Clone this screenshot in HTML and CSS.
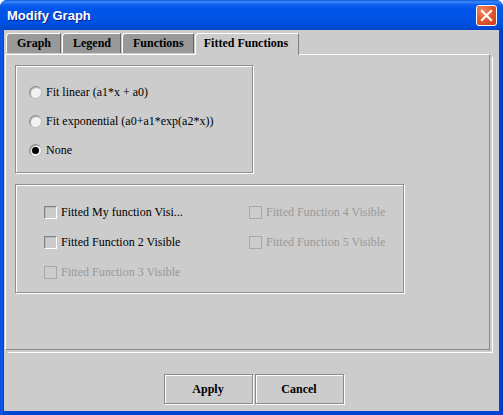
FILE: index.html
```html
<!DOCTYPE html>
<html>
<head>
<meta charset="utf-8">
<link rel="stylesheet" href="styles.css">
</head>
<body>
<div class="window">
  <div class="titlebar">
    <span class="title">Modify Graph</span>
    <div class="close">
      <svg width="21" height="21" viewBox="0 0 21 21"><path d="M6 6 L15 15 M15 6 L6 15" stroke="#fff" stroke-width="2.2" stroke-linecap="square"/></svg>
    </div>
  </div>
  <div class="client">
    <div class="tabs">
      <div class="tab">Graph</div>
      <div class="tab">Legend</div>
      <div class="tab">Functions</div>
      <div class="tab selected">Fitted Functions</div>
    </div>
    <div class="panel">
      <div class="group fit">
        <div class="radio"><span class="rb"></span>Fit linear (a1*x + a0)</div>
        <div class="radio"><span class="rb"></span>Fit exponential (a0+a1*exp(a2*x))</div>
        <div class="radio"><span class="rb on"></span>None</div>
      </div>
      <div class="group vis">
        <div class="check"><span class="cb"></span>Fitted My function Visi...</div>
        <div class="check disabled"><span class="cb"></span>Fitted Function 4 Visible</div>
        <div class="check"><span class="cb"></span>Fitted Function 2 Visible</div>
        <div class="check disabled"><span class="cb"></span>Fitted Function 5 Visible</div>
        <div class="check disabled"><span class="cb"></span>Fitted Function 3 Visible</div>
      </div>
    </div>
    <div class="buttons">
      <div class="btn">Apply</div>
      <div class="btn">Cancel</div>
    </div>
  </div>
</div>
</body>
</html>
```
FILE: styles.css
```css
html, body {
  margin: 0;
  padding: 0;
  background: #ffffff;
}
.window {
  width: 503px;
  height: 415px;
  display: flex;
  flex-direction: column;
  background: linear-gradient(to right, #0831d9 0, #166aee 1px, #0055e5 2px, #0046d5 4px, #0046d5 499px, #0a3fc8 501px, #0831d9 503px);
  border-radius: 7px 7px 0 0;
  overflow: hidden;
  font-size: 12px;
  color: #000;
}
.tab, .radio, .check, .btn {
  font-family: "Liberation Serif", "Tinos", "DejaVu Serif", serif;
}
.titlebar {
  height: 30px;
  flex: none;
  display: flex;
  align-items: center;
  justify-content: space-between;
  padding: 0 6px 0 7px;
  background: linear-gradient(to bottom, #0a5ade 0, #3d8af7 2px, #1665f0 4px, #0055ea 8px, #0053e6 18px, #0050e0 24px, #0046cc 29px, #0840c0 30px);
}
.title {
  font-family: "Liberation Sans", Arial, sans-serif;
  font-weight: bold;
  font-size: 13px;
  color: #fff;
  text-shadow: 1px 1px 0 #0a1e8c;
  margin-top: 1px;
}
.close {
  width: 21px;
  height: 21px;
  box-sizing: border-box;
  border: 1px solid #fff;
  border-radius: 3px;
  background: radial-gradient(circle at 30% 25%, #f08a66 0, #e25a30 45%, #c8401c 100%);
  display: flex;
  margin-top: 1px;
}
.close svg {
  margin: -1px;
}
.client {
  flex: 1;
  margin: 0 4px 4px 4px;
  background: #cccccc;
  display: flex;
  flex-direction: column;
}
.tabs {
  display: flex;
  padding: 3px 0 0 2px;
  height: 21px;
  position: relative;
  z-index: 1;
}
.tab {
  height: 20px;
  box-sizing: border-box;
  padding: 0 9px 0 10px;
  display: flex;
  align-items: center;
  font-weight: bold;
  background: #999999;
  border-left: 1px solid #ffffff;
  border-top: 1px solid #ffffff;
  border-right: 1px solid #666666;
  border-top-left-radius: 4px;
  margin-right: 1px;
}
.tab.selected {
  background: #cccccc;
  height: 22px;
  padding: 0 10px 2px 8px;
  border-right-color: #808080;
}
.panel {
  margin-left: 1px;
  width: 485px;
  height: 296px;
  box-sizing: border-box;
  border-left: 1px solid #ffffff;
  border-top: 1px solid #ffffff;
  border-right: 1px solid #888888;
  border-bottom: 1px solid #888888;
  box-shadow: 2px 2px 0 #cccccc, 3px 3px 0 #ffffff;
  padding: 10px 0 0 9px;
  display: flex;
  flex-direction: column;
  gap: 11px;
}
.group {
  box-sizing: border-box;
  border: 1px solid #8e8e8e;
  box-shadow: inset 1px 1px 0 #ffffff, 1px 1px 0 #ffffff;
}
.group.fit {
  width: 238px;
  height: 108px;
  padding: 18px 0 0 13px;
  display: flex;
  flex-direction: column;
  gap: 13px;
}
.radio {
  display: flex;
  align-items: center;
  height: 16px;
  gap: 4px;
}
.rb {
  width: 13px;
  height: 13px;
  box-sizing: border-box;
  border-radius: 50%;
  border: 1px solid #8c8c8c;
  border-right-color: #bcbcbc;
  border-bottom-color: #bcbcbc;
  background: #f2f2f2;
  box-shadow: inset 1px 1px 0 #b0b0b0;
  position: relative;
}
.rb.on::after {
  content: "";
  position: absolute;
  left: 2px;
  top: 2px;
  width: 7px;
  height: 7px;
  border-radius: 50%;
  background: #000;
}
.group.vis {
  width: 389px;
  height: 109px;
  padding: 19px 0 0 28px;
  display: grid;
  grid-template-columns: 205px 150px;
  grid-auto-rows: 16px;
  row-gap: 14px;
}
.check {
  display: flex;
  align-items: center;
  gap: 4px;
  white-space: nowrap;
}
.cb {
  width: 13px;
  height: 13px;
  box-sizing: border-box;
  border: 1px solid #808080;
  border-right-color: #ffffff;
  border-bottom-color: #ffffff;
  box-shadow: inset 1px 1px 0 #b8b8b8;
  background: #cccccc;
}
.check.disabled {
  color: #999999;
}
.check.disabled .cb {
  border-color: #a8a8a8;
  box-shadow: none;
}
.buttons {
  display: flex;
  justify-content: center;
  gap: 2px;
  padding: 24px 0 0 4px;
}
.btn {
  width: 89px;
  height: 30px;
  box-sizing: border-box;
  border: 1px solid #8a8a8a;
  box-shadow: inset 1px 1px 0 #ffffff, 1px 1px 0 #ffffff;
  display: flex;
  align-items: center;
  justify-content: center;
  font-weight: bold;
}
```
